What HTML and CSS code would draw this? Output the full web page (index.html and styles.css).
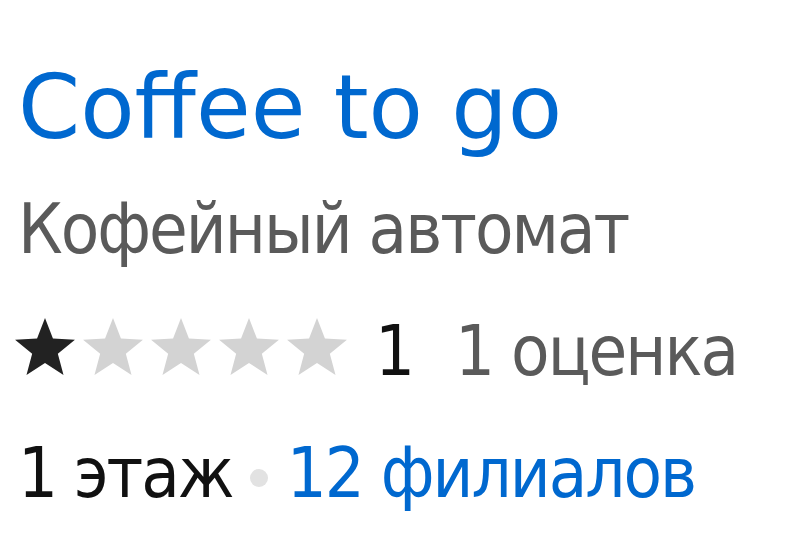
FILE: index.html
```html
<!DOCTYPE html>
<html lang="ru">
<head>
<meta charset="utf-8">
<title>Coffee to go</title>
<link rel="stylesheet" href="styles.css">
</head>
<body>
<div class="card">
  <a class="title" href="#">Coffee to go</a>
  <div class="category">Кофейный автомат</div>
  <div class="rating">
    <span class="stars">
      <svg class="star on" viewBox="0 0 60 57"><polygon points="30,0 37.94,20.58 59.96,21.77 42.84,35.67 48.52,56.98 30,45 11.48,56.98 17.16,35.67 0.04,21.77 22.06,20.58"/></svg>
      <svg class="star" viewBox="0 0 60 57"><polygon points="30,0 37.94,20.58 59.96,21.77 42.84,35.67 48.52,56.98 30,45 11.48,56.98 17.16,35.67 0.04,21.77 22.06,20.58"/></svg>
      <svg class="star" viewBox="0 0 60 57"><polygon points="30,0 37.94,20.58 59.96,21.77 42.84,35.67 48.52,56.98 30,45 11.48,56.98 17.16,35.67 0.04,21.77 22.06,20.58"/></svg>
      <svg class="star" viewBox="0 0 60 57"><polygon points="30,0 37.94,20.58 59.96,21.77 42.84,35.67 48.52,56.98 30,45 11.48,56.98 17.16,35.67 0.04,21.77 22.06,20.58"/></svg>
      <svg class="star" viewBox="0 0 60 57"><polygon points="30,0 37.94,20.58 59.96,21.77 42.84,35.67 48.52,56.98 30,45 11.48,56.98 17.16,35.67 0.04,21.77 22.06,20.58"/></svg>
    </span>
    <span class="score">1</span>
    <span class="count">1 оценка</span>
  </div>
  <div class="meta">
    <span class="floor">1 этаж</span>
    <span class="dot"></span>
    <a class="branches" href="#">12 филиалов</a>
  </div>
</div>
</body>
</html>
```

FILE: styles.css
```css
html, body {
  margin: 0;
  padding: 0;
  background: #ffffff;
}

.card {
  display: flex;
  flex-direction: column;
  gap: 22px;
  padding: 57px 0 0 18px;
  font-family: "DejaVu Sans Condensed", "DejaVu Sans", Verdana, sans-serif;
  font-stretch: condensed;
}

.title {
  display: block;
  font-family: "DejaVu Sans", Verdana, sans-serif;
  font-stretch: normal;
  font-size: 89px;
  line-height: 100px;
  height: 100px;
  color: #0068cf;
  text-decoration: none;
  white-space: nowrap;
}

.category {
  font-size: 70px;
  line-height: 100px;
  height: 100px;
  letter-spacing: -2px;
  color: #5a5a5a;
  white-space: nowrap;
}

.rating {
  display: flex;
  align-items: flex-start;
  height: 100px;
  font-size: 70px;
  line-height: 100px;
  letter-spacing: -2px;
  white-space: nowrap;
}

.stars {
  display: flex;
  gap: 8px;
  margin: 17px 0 0 -3px;
  flex-shrink: 0;
}

.star {
  width: 60px;
  height: 57px;
  fill: #d3d3d3;
}

.star.on {
  fill: #222222;
}

.score {
  color: #111111;
  margin-left: 28px;
}

.count {
  color: #5a5a5a;
  margin-left: 42px;
}

.meta {
  display: flex;
  align-items: center;
  height: 100px;
  font-size: 70px;
  line-height: 100px;
  letter-spacing: -2px;
  white-space: nowrap;
}

.floor {
  color: #111111;
}

.dot {
  flex-shrink: 0;
  width: 18px;
  height: 18px;
  border-radius: 50%;
  background: #e2e2e2;
  margin: 10px 19px 0 17px;
}

.branches {
  color: #0068cf;
  text-decoration: none;
}
```
